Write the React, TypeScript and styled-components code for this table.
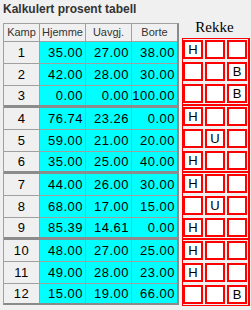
import React from "react";
import styled, { createGlobalStyle } from "styled-components";

interface RowData {
  kamp: number;
  h: string;
  u: string;
  b: string;
  pick: "H" | "U" | "B";
}

const rows: RowData[] = [
  { kamp: 1, h: "35.00", u: "27.00", b: "38.00", pick: "H" },
  { kamp: 2, h: "42.00", u: "28.00", b: "30.00", pick: "B" },
  { kamp: 3, h: "0.00", u: "0.00", b: "100.00", pick: "B" },
  { kamp: 4, h: "76.74", u: "23.26", b: "0.00", pick: "H" },
  { kamp: 5, h: "59.00", u: "21.00", b: "20.00", pick: "U" },
  { kamp: 6, h: "35.00", u: "25.00", b: "40.00", pick: "H" },
  { kamp: 7, h: "44.00", u: "26.00", b: "30.00", pick: "H" },
  { kamp: 8, h: "68.00", u: "17.00", b: "15.00", pick: "U" },
  { kamp: 9, h: "85.39", u: "14.61", b: "0.00", pick: "H" },
  { kamp: 10, h: "48.00", u: "27.00", b: "25.00", pick: "H" },
  { kamp: 11, h: "49.00", u: "28.00", b: "23.00", pick: "H" },
  { kamp: 12, h: "15.00", u: "19.00", b: "66.00", pick: "B" },
];

const GlobalStyle = createGlobalStyle`
  html, body {
    margin: 0;
    padding: 0;
    background: #f0f0f0;
    overflow: hidden;
  }
  body {
    font-family: "Liberation Sans", Arial, sans-serif;
  }
`;

const Page = styled.div`
  width: 251px;
  height: 310px;
  padding: 0 0 0 3px;
  box-sizing: border-box;
  background: #f0f0f0;
`;

const Title = styled.div`
  height: 23px;
  padding-top: 2px;
  box-sizing: border-box;
  font-size: 12px;
  line-height: 14px;
  font-weight: bold;
  color: #333333;
`;

const Main = styled.div`
  display: flex;
  align-items: flex-start;
  gap: 3px;
`;

const Grid = styled.div`
  border-top: 1px solid #a0a0a0;
  border-left: 1px solid #a0a0a0;
  border-right: 2px solid #8a8a8a;
  border-bottom: 2px solid #8a8a8a;
`;

const Row = styled.div<{ $head?: boolean; $groupEnd?: boolean; $last?: boolean }>`
  display: grid;
  grid-template-columns: 35px 45px 45px 45px;
  column-gap: 1px;
  background: #a0a0a0;
  height: ${(p) => (p.$head ? 17 : p.$groupEnd ? 19 : 21)}px;
  border-bottom: ${(p) =>
    p.$last ? "none" : p.$groupEnd ? "3px solid #8c8c8c" : "1px solid #a0a0a0"};
`;

const HeadCell = styled.div`
  background: #f0f0f0;
  color: #333333;
  font-size: 11px;
  line-height: 17px;
  text-align: center;
`;

const KampCell = styled.div`
  background: #f0f0f0;
  color: #000;
  font-size: 13px;
  letter-spacing: 0.4px;
  display: flex;
  align-items: center;
  justify-content: center;
`;

const NumCell = styled.div`
  background: #00ffff;
  color: #000;
  font-size: 13px;
  letter-spacing: 0.5px;
  display: flex;
  align-items: center;
  justify-content: flex-end;
  padding-right: 2px;
`;

const Side = styled.div`
  display: flex;
  flex-direction: column;
  width: 68px;
`;

const Label = styled.div`
  height: 15px;
  margin-top: -3px;
  margin-bottom: 3px;
  padding-right: 3px;
  font-family: "Liberation Serif", "Times New Roman", serif;
  font-size: 15px;
  line-height: 15px;
  text-align: center;
  color: #000;
`;

const Group = styled.div`
  display: grid;
  grid-template-columns: repeat(3, 20px);
  grid-auto-rows: 19px;
  column-gap: 2px;
  row-gap: 3px;
  padding: 1px 1px 1px 0;
  border: 1px solid #ff0000;
  border-right-width: 2px;
  & + & {
    border-top: 1px solid #ff0000;
  }
`;

const Box = styled.div`
  box-sizing: border-box;
  border: 2px solid #ff0000;
  background: #ffffff;
  font-family: "Liberation Sans", Arial, sans-serif;
  font-size: 13px;
  color: #000;
  display: flex;
  align-items: center;
  justify-content: center;
`;

const picks: Array<"H" | "U" | "B"> = ["H", "U", "B"];

const App: React.FC = () => {
  const groups = [0, 1, 2, 3].map((g) => rows.slice(g * 3, g * 3 + 3));
  return (
    <Page>
      <GlobalStyle />
      <Title>Kalkulert prosent tabell</Title>
      <Main>
        <Grid>
          <Row $head>
            <HeadCell>Kamp</HeadCell>
            <HeadCell>Hjemme</HeadCell>
            <HeadCell>Uavgj.</HeadCell>
            <HeadCell>Borte</HeadCell>
          </Row>
          {rows.map((r, i) => (
            <Row key={r.kamp} $groupEnd={i % 3 === 2} $last={i === rows.length - 1}>
              <KampCell>{r.kamp}</KampCell>
              <NumCell>{r.h}</NumCell>
              <NumCell>{r.u}</NumCell>
              <NumCell>{r.b}</NumCell>
            </Row>
          ))}
        </Grid>
        <Side>
          <Label>Rekke</Label>
          {groups.map((grp, gi) => (
            <Group key={gi}>
              {grp.map((r) =>
                picks.map((p) => <Box key={`${r.kamp}${p}`}>{r.pick === p ? p : ""}</Box>)
              )}
            </Group>
          ))}
        </Side>
      </Main>
    </Page>
  );
};

export default App;
